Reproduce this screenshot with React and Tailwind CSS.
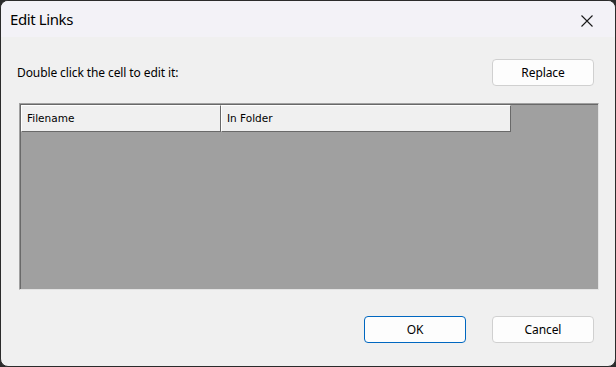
import React from "react";

function Btn({ children, primary }) {
  return (
    <button
      className={
        primary
          ? "w-[102px] h-[27px] rounded-[4px] border border-[#0067c0] bg-[#fdfdfd] text-[12px] tracking-[-0.1px] text-black"
          : "w-[102px] h-[27px] rounded-[4px] border border-[#d0d0d0] bg-[#fdfdfd] text-[12px] tracking-[-0.1px] text-black"
      }
    >
      {children}
    </button>
  );
}

export default function App() {
  return (
    <div className="w-[616px] h-[367px] bg-[#2b2b2b] font-['Noto_Sans',sans-serif]">
      <div className="w-full h-full rounded-[8px] border border-[#2b2b2b] overflow-hidden flex flex-col bg-[#f0f0f0]">
        {/* title bar */}
        <div className="h-[36px] shrink-0 bg-[#f3f2f7] flex items-center justify-between pl-[9px] pr-[22px]">
          <span className="text-[15px] tracking-[-0.4px] text-black">Edit Links</span>
          <svg width="12" height="12" viewBox="0 0 12 12" className="mt-[3px]">
            <path d="M0.5 0.5 L11.5 11.5 M11.5 0.5 L0.5 11.5" stroke="#1a1a1a" strokeWidth="1.1" />
          </svg>
        </div>

        {/* body */}
        <div className="flex-1 flex flex-col px-[18px]">
          <div className="flex items-center justify-between mt-[22px] pr-[3px]">
            <span className="text-[12px] tracking-[-0.1px] text-black -ml-[2px]">Double click the cell to edit it:</span>
            <Btn>Replace</Btn>
          </div>

          <div className="mt-[17px] h-[187px] w-[580px] border-t border-l border-[#a0a0a0] border-r border-b border-r-[#e3e3e3] border-b-[#e3e3e3]">
            <div className="w-full h-full border-t border-l border-[#696969] bg-[#a0a0a0]">
              <div className="flex font-['DejaVu_Sans',sans-serif] text-[10.5px] text-black">
                <div className="w-[200px] h-[27px] bg-[#f0f0f0] border-t border-l border-white border-r border-b border-r-[#696969] border-b-[#696969] flex items-center pl-[5px]">
                  Filename
                </div>
                <div className="w-[290px] h-[27px] bg-[#f0f0f0] border-t border-l border-white border-r border-b border-r-[#696969] border-b-[#696969] flex items-center pl-[5px]">
                  In Folder
                </div>
              </div>
            </div>
          </div>

          <div className="flex justify-end gap-[26px] mt-[26px] pr-[3px]">
            <Btn primary>OK</Btn>
            <Btn>Cancel</Btn>
          </div>
        </div>
      </div>
    </div>
  );
}
